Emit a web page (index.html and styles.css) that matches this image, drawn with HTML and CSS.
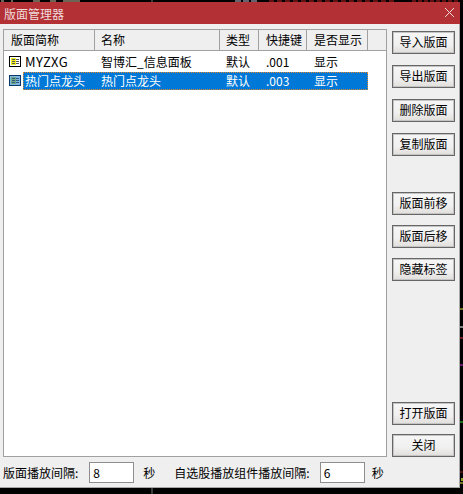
FILE: index.html
```html
<!DOCTYPE html>
<html lang="zh">
<head>
<meta charset="utf-8">
<title>版面管理器</title>
<link rel="stylesheet" href="styles.css">
</head>
<body>
<svg class="backdrop" width="463" height="494" viewBox="0 0 463 494">
  <path d="M1 1h3M11 1h2M33 1h7M50 1h6M63 1h17" stroke="#d8c8a8" fill="none"/>
  <path d="M152 0v2M152 488v6" stroke="#777" fill="none"/>
  <path d="M269 1h126" stroke="#c02020" stroke-dasharray="5 3" fill="none"/>
  <path d="M412 1h48" stroke="#c02020" stroke-dasharray="4 2" fill="none"/>
  <path d="M235 1h22" stroke="#c8c8e0" stroke-dasharray="6 2" fill="none"/>
  <path d="M460 309h3" stroke="#e8e840"/>
  <path d="M460 327h3" stroke="#fff"/>
  <path d="M460 338h3" stroke="#e03030"/>
  <path d="M460 365h3" stroke="#d030d0"/>
  <path d="M460 422h3" stroke="#30e030"/>
  <path d="M460 472h3" stroke="#a02020"/>
  <path d="M461 478h2v3h-2z" fill="#90a020"/>
  <path d="M460 483h3" stroke="#e8e840"/>
</svg>
<div class="dialog">
  <div class="titlebar">
    <span class="title">版面管理器</span>
    <svg class="close" width="9" height="9" viewBox="0 0 9 9"><path d="M0 0L9 9M9 0L0 9" stroke="#eed8d8" stroke-width="1" fill="none"/></svg>
  </div>
  <div class="content">
    <div class="main">
      <div class="list">
        <div class="header">
          <div class="hcell c1">版面简称</div>
          <div class="hcell c2">名称</div>
          <div class="hcell c3">类型</div>
          <div class="hcell c4">快捷键</div>
          <div class="hcell c5">是否显示</div>
          <div class="hcell c6"></div>
        </div>
        <div class="row">
          <svg class="icon" width="12" height="11" viewBox="0 0 12 11"><rect x=".5" y=".5" width="11" height="10" fill="#fff" stroke="#000"/><rect x="2" y="2" width="5" height="7" fill="#f0f020"/><path d="M3 3.5h3M3 5.5h3M3 7.5h3M7 3.5h3M7 5.5h3M7 7.5h3" stroke="#555"/></svg>
          <div class="cells">
            <span class="c1t latin">MYZXG</span><span class="c2t">智博汇_信息面板</span><span class="c3t">默认</span><span class="c4t">.001</span><span class="c5t">显示</span>
          </div>
        </div>
        <div class="row selected">
          <svg class="icon" width="12" height="11" viewBox="0 0 12 11"><rect x=".5" y=".5" width="11" height="10" fill="#7fb4de" stroke="#0a3a6a"/><rect x="2" y="2" width="5" height="7" fill="#70a888"/><path d="M3 3.5h3M3 5.5h3M3 7.5h3M7 3.5h3M7 5.5h3M7 7.5h3" stroke="#2c5a80"/></svg>
          <div class="cells">
            <span class="c1t">热门点龙头</span><span class="c2t">热门点龙头</span><span class="c3t">默认</span><span class="c4t">.003</span><span class="c5t">显示</span>
          </div>
        </div>
      </div>
      <div class="buttons">
        <div class="group">
          <button class="btn">导入版面</button>
          <button class="btn">导出版面</button>
          <button class="btn">删除版面</button>
          <button class="btn">复制版面</button>
        </div>
        <div class="group second">
          <button class="btn">版面前移</button>
          <button class="btn">版面后移</button>
          <button class="btn">隐藏标签</button>
        </div>
        <div class="group bottom">
          <button class="btn">打开版面</button>
          <button class="btn">关闭</button>
        </div>
      </div>
    </div>
    <div class="footer">
      <span class="l1">版面播放间隔:</span>
      <span class="input i1">8</span>
      <span class="l2">秒</span>
      <span class="l3">自选股播放组件播放间隔:</span>
      <span class="input i2">6</span>
      <span class="l4">秒</span>
    </div>
  </div>
</div>
</body>
</html>
```
FILE: styles.css
```css
* { box-sizing: border-box; }
html, body { margin: 0; height: 100%; }
body {
  position: relative;
  background: #000;
  font-family: "Noto Sans CJK SC", "Liberation Sans", sans-serif;
  font-size: 12px;
  color: #000;
  overflow: hidden;
}
.backdrop { position: absolute; left: 0; top: 0; }
.dialog {
  position: relative;
  width: 460px;
  height: 486px;
  margin-top: 2px;
  background: #efefef;
  display: flex;
  flex-direction: column;
}
.titlebar {
  height: 22px;
  flex: none;
  background: #b33035;
  color: #f0dcdc;
  display: flex;
  align-items: center;
  justify-content: space-between;
  padding: 0 6px 0 4px;
  font-size: 12px;
}
.close { margin-top: -1px; }
.content {
  flex: 1;
  display: flex;
  flex-direction: column;
  padding: 5px 4px 0 3px;
  border-right: 1px solid #a8a8a8;
  border-bottom: 1px solid #a8a8a8;
}
.main { display: flex; height: 428px; flex: none; }
.list {
  width: 384px;
  flex: none;
  border: 1px solid #a0a0a0;
  background: #fff;
}
.header { display: flex; height: 21px; background: #efefef; border-bottom: 1px solid #a0a0a0; padding-left: 1px; margin-bottom: 2px; }
.hcell { border-right: 1px solid #a0a0a0; padding-left: 6px; line-height: 20px; overflow: hidden; white-space: nowrap; }
.c1 { width: 90px; }
.c2 { width: 125px; }
.c3 { width: 39px; }
.c4 { width: 48px; padding-left: 7px; }
.c5 { width: 61px; padding-left: 7px; }
.c6 { width: 18px; border-right: 0; }
.row { display: flex; align-items: center; height: 18px; padding-left: 5px; margin-bottom: 1px; }
.icon { flex: none; margin-top: -2px; }
.cells { display: flex; margin-left: 2px; width: 345px; height: 18px; line-height: 18px; padding-left: 2px; white-space: nowrap; }
.selected .cells { background: #0078d7; color: #fff; outline: 1px dotted #e08a30; outline-offset: -1px; }
.latin { font-size: 13px; letter-spacing: .4px; }
.c1t { width: 76px; }
.c2t { width: 125px; }
.c3t { width: 40px; }
.c4t { width: 48px; }
.c5t { width: 50px; }
.buttons { flex: 1; padding: 2px 0 0 5px; display: flex; flex-direction: column; }
.group { display: flex; flex-direction: column; gap: 11px; }
.group.second { margin-top: 36px; gap: 10px; }
.group.bottom { margin-top: auto; gap: 9px; }
.btn {
  width: 63px;
  height: 23px;
  padding: 0 0 2px;
  border: 1px solid #666;
  box-shadow: inset 0 0 0 1px #c4c4c4;
  background: linear-gradient(#f6f6f6, #f0f0f0 60%, #e0deda);
  font: inherit;
  color: #000;
  display: block;
}
.footer { display: flex; align-items: center; height: 21px; margin-top: 5px; white-space: nowrap; }
.input {
  display: block;
  height: 21px;
  width: 45px;
  background: #fff;
  border: 1px solid #8e8e8e;
  line-height: 19px;
  padding-left: 3px;
}
.i1 { margin-left: 11px; }
.l2 { margin-left: 9px; }
.l3 { margin-left: 19px; }
.i2 { margin-left: 10px; }
.l4 { margin-left: 7px; }
```
